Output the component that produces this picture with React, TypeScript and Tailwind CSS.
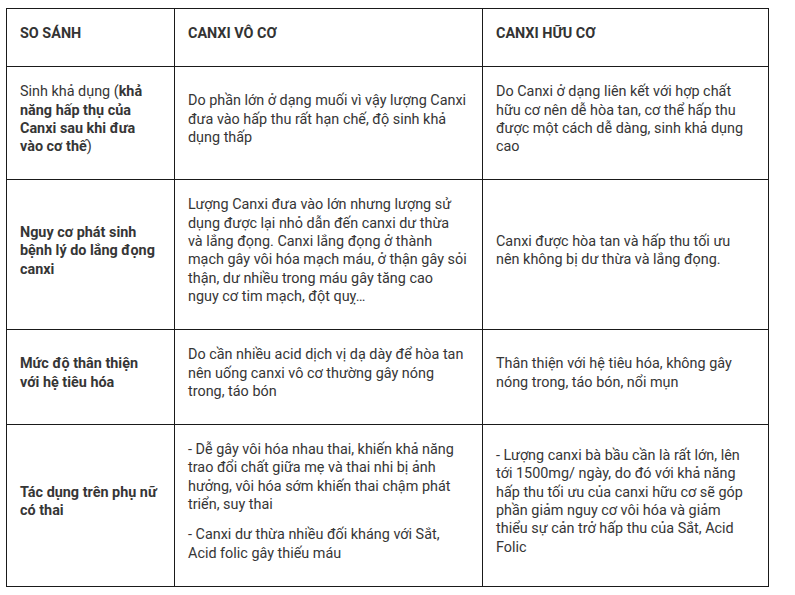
import React from "react";

type Row = {
  label: React.ReactNode;
  inorganic: string[];
  organic: string[];
};

const rows: Row[] = [
  {
    label: (
      <>
        Sinh khả dụng (
        <strong className="font-bold">
          khả năng hấp thụ của Canxi sau khi đưa vào cơ thế
        </strong>
        )
      </>
    ),
    inorganic: [
      "Do phần lớn ở dạng muối vì vậy lượng Canxi đưa vào hấp thu rất hạn chế, độ sinh khả dụng thấp",
    ],
    organic: [
      "Do Canxi ở dạng liên kết với hợp chất hữu cơ nên dễ hòa tan, cơ thể hấp thu được một cách dễ dàng, sinh khả dụng cao",
    ],
  },
  {
    label: <strong className="font-bold">Nguy cơ phát sinh bệnh lý do lắng đọng canxi</strong>,
    inorganic: [
      "Lượng Canxi đưa vào lớn nhưng lượng sử dụng được lại nhỏ dẫn đến canxi dư thừa và lắng đọng. Canxi lắng đọng ở thành mạch gây vôi hóa mạch máu, ở thận gây sỏi thận, dư nhiều trong máu gây tăng cao nguy cơ tim mạch, đột quỵ…",
    ],
    organic: ["Canxi được hòa tan và hấp thu tối ưu nên không bị dư thừa và lắng đọng."],
  },
  {
    label: <strong className="font-bold">Mức độ thân thiện với hệ tiêu hóa</strong>,
    inorganic: [
      "Do cần nhiều acid dịch vị dạ dày để hòa tan nên uống canxi vô cơ thường gây nóng trong, táo bón",
    ],
    organic: ["Thân thiện với hệ tiêu hóa, không gây nóng trong, táo bón, nổi mụn"],
  },
  {
    label: <strong className="font-bold">Tác dụng trên phụ nữ có thai</strong>,
    inorganic: [
      "- Dễ gây vôi hóa nhau thai, khiến khả năng trao đổi chất giữa mẹ và thai nhi bị ảnh hưởng, vôi hóa sớm khiến thai chậm phát triển, suy thai",
      "- Canxi dư thừa nhiều đối kháng với Sắt, Acid folic gây thiếu máu",
    ],
    organic: [
      "- Lượng canxi bà bầu cần là rất lớn, lên tới 1500mg/ ngày, do đó với khả năng hấp thu tối ưu của canxi hữu cơ sẽ góp phần giảm nguy cơ vôi hóa và giảm thiểu sự cản trở hấp thu của Sắt, Acid Folic",
    ],
  },
];

const cell = "border border-[#1a1a1a] pl-[13px] pt-[16px] pb-[11px] align-middle";
const side = `${cell} pr-[16px]`;
const mid = `${cell} pr-[15.25px]`;

export default function App() {
  return (
    <div className="min-h-[595px] w-[795px] bg-white pt-[8px] pl-[6px] font-['Roboto',sans-serif] text-[14.4px] leading-[18.3px] text-[#363636]">
      <table className="w-[762px] table-fixed border-collapse">
        <colgroup>
          <col className="w-[168px]" />
          <col className="w-[308px]" />
          <col className="w-[286px]" />
        </colgroup>
        <thead>
          <tr>
            {["SO SÁNH", "CANXI VÔ CƠ", "CANXI HỮU CƠ"].map((h, i) => (
              <th key={h} className={`${i === 1 ? mid : side} text-left font-bold text-[#333]`}>
                <p className="mb-[12px]">{h}</p>
              </th>
            ))}
          </tr>
        </thead>
        <tbody>
          {rows.map((r, i) => (
            <tr key={i}>
              <td className={side}>
                <p className="mb-[12px]">{r.label}</p>
              </td>
              <td className={mid}>
                {r.inorganic.map((t, j) => (
                  <p key={j} className="mb-[12px]">
                    {t}
                  </p>
                ))}
              </td>
              <td className={side}>
                {r.organic.map((t, j) => (
                  <p key={j} className="mb-[12px]">
                    {t}
                  </p>
                ))}
              </td>
            </tr>
          ))}
        </tbody>
      </table>
    </div>
  );
}
